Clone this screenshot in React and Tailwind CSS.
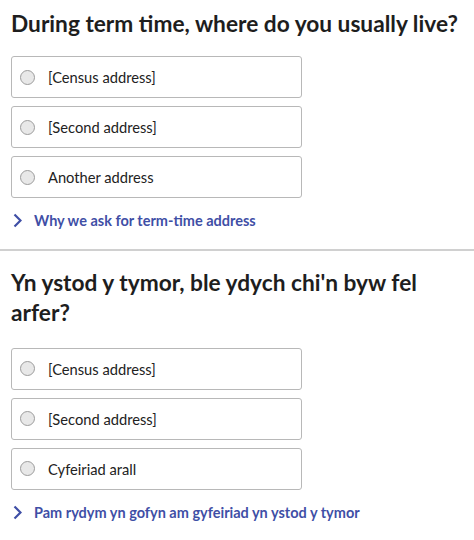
const QUESTIONS = [
  {
    title: 'During term time, where do you usually live?',
    options: ['[Census address]', '[Second address]', 'Another address'],
    link: 'Why we ask for term-time address',
  },
  {
    title: "Yn ystod y tymor, ble ydych chi'n byw fel arfer?",
    options: ['[Census address]', '[Second address]', 'Cyfeiriad arall'],
    link: 'Pam rydym yn gofyn am gyfeiriad yn ystod y tymor',
  },
];

function Option({ label }) {
  return (
    <label className="flex items-center h-[42px] w-[291px] border border-[#b8b8b8] rounded-[3px] pl-[8px] bg-white">
      <span className="w-[15px] h-[15px] rounded-full border-[1.5px] border-[#9c9c9c] bg-[#e8e8e8] shrink-0"></span>
      <span className="ml-[13px] text-[14.7px] text-[#222]">{label}</span>
    </label>
  );
}

function Question({ q, gap }) {
  return (
    <section className="px-[11px]">
      <h1 className="text-[22.7px] leading-[30px] font-bold text-[#1e1e1e] max-w-[452px]">{q.title}</h1>
      <div className={`flex flex-col gap-[8px] ${gap}`}>
        {q.options.map((o) => (
          <Option key={o} label={o} />
        ))}
      </div>
      <a href="#" className="flex items-center gap-[12px] mt-[12px] text-[14.5px] font-bold text-[#3f4fa6]">
        <svg width="9" height="15" viewBox="0 0 9 15" className="ml-[2px] shrink-0">
          <polyline points="1.5,1.5 7.5,7.5 1.5,13.5" fill="none" stroke="currentColor" strokeWidth="2.2" strokeLinejoin="miter" />
        </svg>
        <span>{q.link}</span>
      </a>
    </section>
  );
}

export default function App() {
  return (
    <div className="bg-white min-h-[540px] pt-[9px]" style={{ fontFamily: 'Lato, "Open Sans", sans-serif' }}>
      <Question q={QUESTIONS[0]} gap="mt-[17px]" />
      <div className="h-[2px] bg-[#d0d0d0] mt-[17px] mb-[17px]"></div>
      <Question q={QUESTIONS[1]} gap="mt-[20px]" />
    </div>
  );
}
